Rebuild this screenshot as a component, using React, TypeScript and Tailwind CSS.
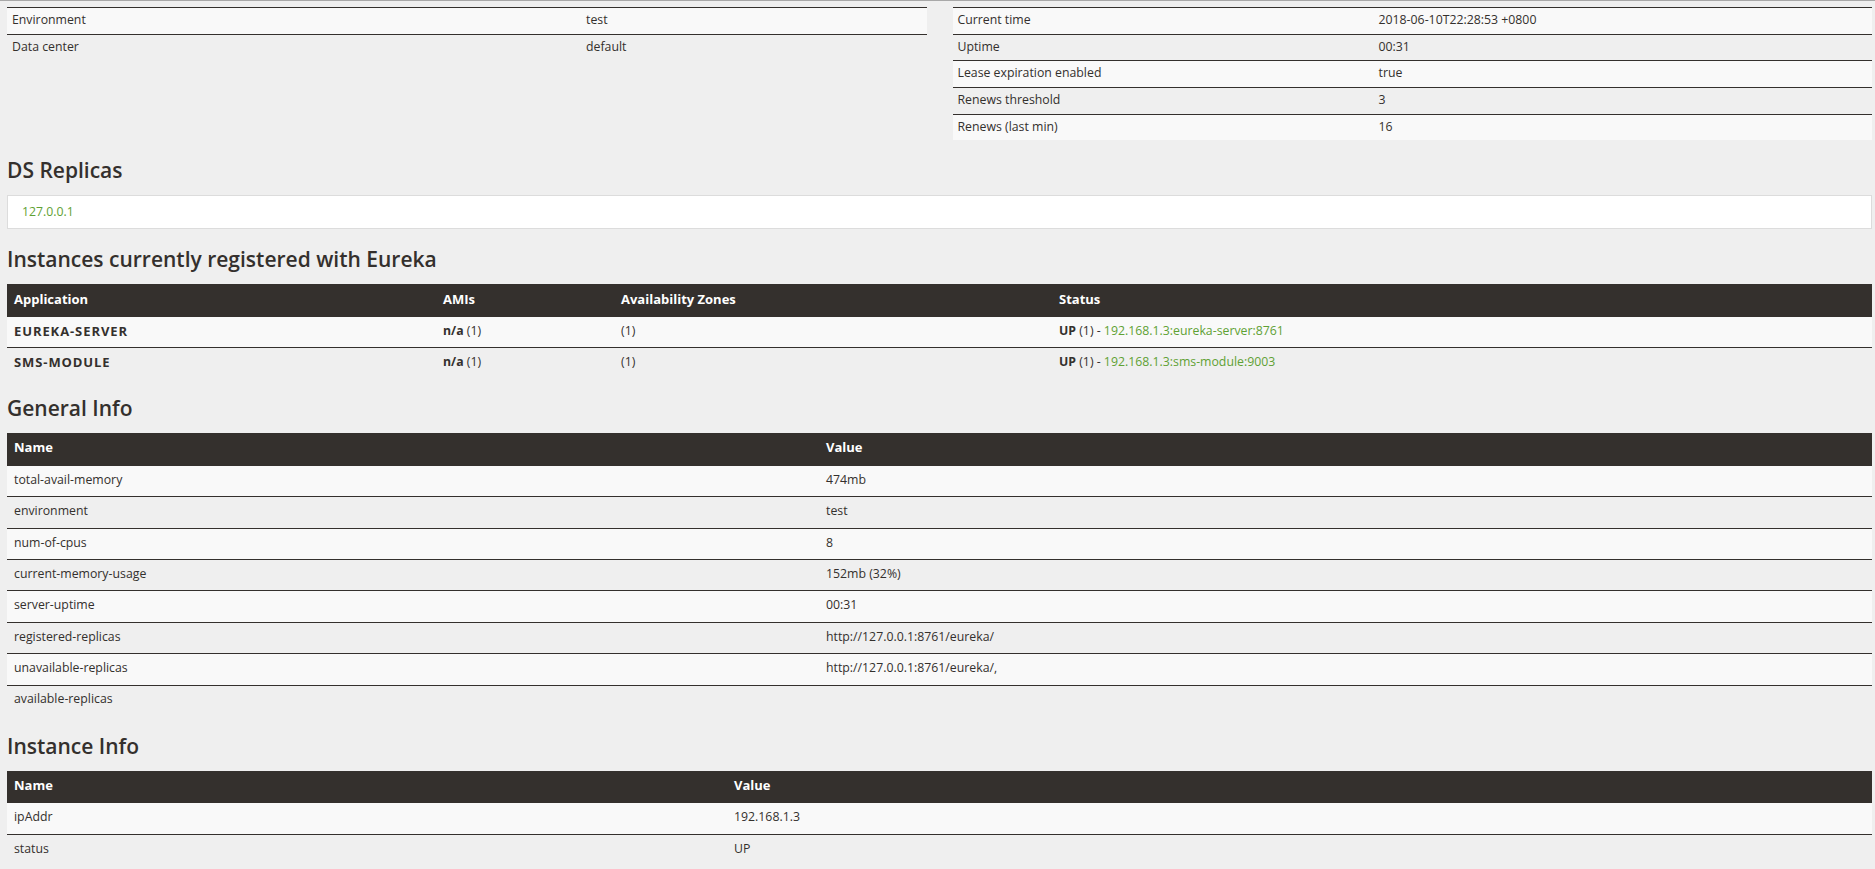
import React from 'react';

const body = "font-['Open_Sans',_'Liberation_Sans',_sans-serif]";
const head = "font-['Open_Sans',_'Liberation_Sans',_sans-serif]";

const leftInfo = [
  ['Environment', 'test'],
  ['Data center', 'default'],
];

const rightInfo = [
  ['Current time', '2018-06-10T22:28:53 +0800'],
  ['Uptime', '00:31'],
  ['Lease expiration enabled', 'true'],
  ['Renews threshold', '3'],
  ['Renews (last min)', '16'],
];

const instances = [
  { app: 'EUREKA-SERVER', link: '192.168.1.3:eureka-server:8761' },
  { app: 'SMS-MODULE', link: '192.168.1.3:sms-module:9003' },
];

const generalInfo = [
  ['total-avail-memory', '474mb'],
  ['environment', 'test'],
  ['num-of-cpus', '8'],
  ['current-memory-usage', '152mb (32%)'],
  ['server-uptime', '00:31'],
  ['registered-replicas', 'http://127.0.0.1:8761/eureka/'],
  ['unavailable-replicas', 'http://127.0.0.1:8761/eureka/,'],
  ['available-replicas', ''],
];

const instanceInfo = [
  ['ipAddr', '192.168.1.3'],
  ['status', 'UP'],
];

const Heading: React.FC<{ children: React.ReactNode }> = ({ children }) => (
  <h2 className={`${head} mt-[19px] mb-[14px] h-[22px] leading-[22px] text-[21px] font-semibold text-[#34302d]`}>
    {children}
  </h2>
);

const KeyTable: React.FC<{ rows: string[][]; cols: string }> = ({ rows, cols }) => (
  <div className="w-full">
    {rows.map(([k, v], i) => (
      <div
        key={k}
        className={`grid ${cols} items-center h-[26.67px] pb-[1px] border-t border-[#34302d] ${i % 2 === 0 ? 'bg-[#f9f9f9]' : ''}`}
      >
        <div className="pl-[5px]">{k}</div>
        <div className="pl-[5px]">{v}</div>
      </div>
    ))}
  </div>
);

const NameValueTable: React.FC<{ rows: string[][]; cols: string }> = ({ rows, cols }) => (
  <div className="w-full">
    <div className={`grid ${cols} items-center h-[31.5px] pb-[2px] bg-[#34302d] text-white text-[13px] font-bold`}>
      <div className="pl-[7px]">Name</div>
      <div className="pl-[7px]">Value</div>
    </div>
    {rows.map(([k, v], i) => (
      <div
        key={k}
        className={`grid ${cols} items-center h-[31.4px] pb-[2px] border-t border-[#34302d] ${i % 2 === 0 ? 'bg-[#f9f9f9]' : ''}`}
      >
        <div className="pl-[7px]">{k}</div>
        <div className="pl-[7px]">{v}</div>
      </div>
    ))}
  </div>
);

export default function App() {
  return (
    <div className={`${body} min-h-screen bg-[#efefef] text-[12.3px] text-[#34302d]`}>
      <div className="h-px bg-[#a8a8a8]" />
      <div className="pl-[7px] pr-[3px] pt-[6px] pb-8">
        {/* Environment / status summary */}
        <div className="grid grid-cols-2 gap-[26px] items-start">
          <KeyTable rows={leftInfo} cols="grid-cols-[574px_1fr]" />
          <KeyTable rows={rightInfo} cols="grid-cols-[421px_1fr]" />
        </div>

        <Heading>DS Replicas</Heading>
        <div className="h-[34px] flex items-center pl-[14px] bg-white border border-[#dcdcdc]">
          <span className="text-[#5fa134]">127.0.0.1</span>
        </div>

        <Heading>Instances currently registered with Eureka</Heading>
        <div className="w-full">
          <div className="grid grid-cols-[429px_178px_438px_1fr] items-center h-[32px] pb-[2px] bg-[#34302d] text-white text-[13px] font-bold">
            <div className="pl-[7px]">Application</div>
            <div className="pl-[7px]">AMIs</div>
            <div className="pl-[7px]">Availability Zones</div>
            <div className="pl-[7px]">Status</div>
          </div>
          {instances.map((row, i) => (
            <div
              key={row.app}
              className={`grid grid-cols-[429px_178px_438px_1fr] items-center h-[31px] pb-[2px] border-t border-[#34302d] ${i % 2 === 0 ? 'bg-[#f9f9f9]' : ''}`}
            >
              <div className="pl-[7px] text-[13px] font-bold tracking-[0.07em]">{row.app}</div>
              <div className="pl-[7px]">
                <b>n/a</b> (1)
              </div>
              <div className="pl-[7px]">(1)</div>
              <div className="pl-[7px]">
                <b>UP</b> (1) - <span className="text-[#5fa134]">{row.link}</span>
              </div>
            </div>
          ))}
        </div>

        <Heading>General Info</Heading>
        <NameValueTable rows={generalInfo} cols="grid-cols-[812px_1fr]" />

        <Heading>Instance Info</Heading>
        <NameValueTable rows={instanceInfo} cols="grid-cols-[720px_1fr]" />
      </div>
    </div>
  );
}
